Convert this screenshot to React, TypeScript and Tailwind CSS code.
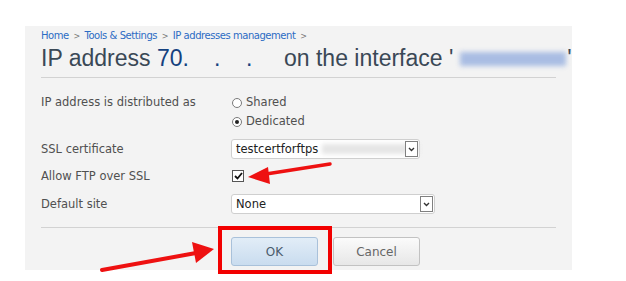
import React from 'react';

const Radio: React.FC<{ checked?: boolean; label: string }> = ({ checked, label }) => (
    <div className="flex items-center h-[19px]">
        <span className="w-[10px] h-[10px] rounded-full border border-[#7a7a7a] bg-white flex items-center justify-center ml-[1px]">
            {checked && <span className="w-[4px] h-[4px] rounded-full bg-[#222]" />}
        </span>
        <span className="ml-[4px]">{label}</span>
    </div>
);

const SelectBox: React.FC<{ value: string; width: string; blur?: boolean }> = ({ value, width, blur }) => (
    <div className={`${width} h-[20px] bg-white border border-[#cfcfcf] rounded-[3px] flex items-center relative`}>
        <span className="pl-[4px] text-[#222]">{value}</span>
        {blur && <span className="ml-[4px] w-[100px] h-[10px] bg-[#e6e6e6] blur-[2px]" />}
        <span className="absolute right-[1px] top-[1px] bottom-[1px] w-[13px] border border-[#808080] bg-white flex items-center justify-center">
            <svg width="7" height="5" viewBox="0 0 7 5"><path d="M1 1 L3.5 3.5 L6 1" stroke="#333" strokeWidth="1.4" fill="none" /></svg>
        </span>
    </div>
);

const Sep = () => <span className="text-[#777] text-[8px] mx-[2px]">&gt;</span>;

export default function App() {
    return (
        <div className="relative w-[626px] h-[281px] bg-white overflow-hidden">
            <div className="ml-[25px] mt-[26px] w-[547px] h-[244px] bg-[#f3f3f3] px-4 pt-[3px] font-['DejaVu_Sans',sans-serif] text-[11.5px] text-[#505050]">
                {/* Breadcrumb */}
                <div className="h-[14px] leading-[14px] text-[10px] tracking-[-0.45px] text-[#2c6cc4] whitespace-nowrap">
                    Home <Sep /> Tools &amp; Settings <Sep /> IP addresses management <Sep />
                </div>

                {/* Title */}
                <div className="mt-[1px] h-[34px] border-b border-[#d2d2d2] font-['Liberation_Sans',sans-serif] text-[23px] leading-[28px] text-[#3a4856] whitespace-nowrap flex">
                    <span className="w-[173px] shrink-0">IP address <span className="text-[#14417f]">70.</span></span>
                    <span className="w-[32px] shrink-0 text-[#14417f]">.</span>
                    <span className="w-[38px] shrink-0 text-[#14417f]">.</span>
                    <span className="shrink-0">on the interface '</span>
                    <span className="w-[106px] h-[14px] mt-[8px] ml-[7px] shrink-0 bg-[#a9bde3] blur-[2.5px]" />
                    <span className="shrink-0 ml-[1px]">'</span>
                </div>

                {/* Form */}
                <div className="grid grid-cols-[190px_1fr] pt-[15px] leading-[19px]">
                    <div className="h-[19px]">IP address is distributed as</div>
                    <div>
                        <Radio label="Shared" />
                        <Radio checked label="Dedicated" />
                    </div>

                    <div className="mt-[8px] h-[20px] leading-[20px]">SSL certificate</div>
                    <div className="mt-[8px]"><SelectBox value="testcertforftps" width="w-[189px]" blur /></div>

                    <div className="mt-[11px] h-[12px] leading-[12px]">Allow FTP over SSL</div>
                    <div className="mt-[11px] h-[12px] flex items-center">
                        <span className="w-[12px] h-[12px] ml-[1px] border border-[#555] bg-white flex items-center justify-center">
                            <svg width="9" height="8" viewBox="0 0 9 8"><path d="M1 4 L3.5 6.5 L8 1" stroke="#111" strokeWidth="1.8" fill="none" /></svg>
                        </span>
                    </div>

                    <div className="mt-[12px] h-[20px] leading-[20px]">Default site</div>
                    <div className="mt-[12px]"><SelectBox value="None" width="w-[204px]" /></div>
                </div>

                <div className="mt-[13px] border-t border-[#d2d2d2] pt-[9px] pl-[190px] flex gap-[15px]">
                    <button className="w-[87px] h-[29px] rounded-[3px] border border-[#a9c1da] bg-gradient-to-b from-[#e2edf7] to-[#c9dcef] text-[#4a5b6c] text-[12px]">OK</button>
                    <button className="w-[87px] h-[29px] rounded-[3px] border border-[#c2c2c2] bg-gradient-to-b from-[#fbfbfb] to-[#e7e7e7] text-[#666] text-[12px]">Cancel</button>
                </div>
            </div>

            {/* Annotations */}
            <div className="absolute left-[218px] top-[226px] w-[114px] h-[48px] border-4 border-[#f20000]" />
            <svg className="absolute left-0 top-0" width="626" height="281" viewBox="0 0 626 281">
                <line x1="102" y1="270" x2="196" y2="253" stroke="#ee1111" strokeWidth="4" strokeLinecap="round" />
                <polygon points="214,249 192,242 196,263" fill="#ee1111" />
                <line x1="330" y1="164" x2="266" y2="174" stroke="#ee1111" strokeWidth="3.5" strokeLinecap="round" />
                <polygon points="248,177 268,167 270,184" fill="#ee1111" />
            </svg>
        </div>
    );
}
